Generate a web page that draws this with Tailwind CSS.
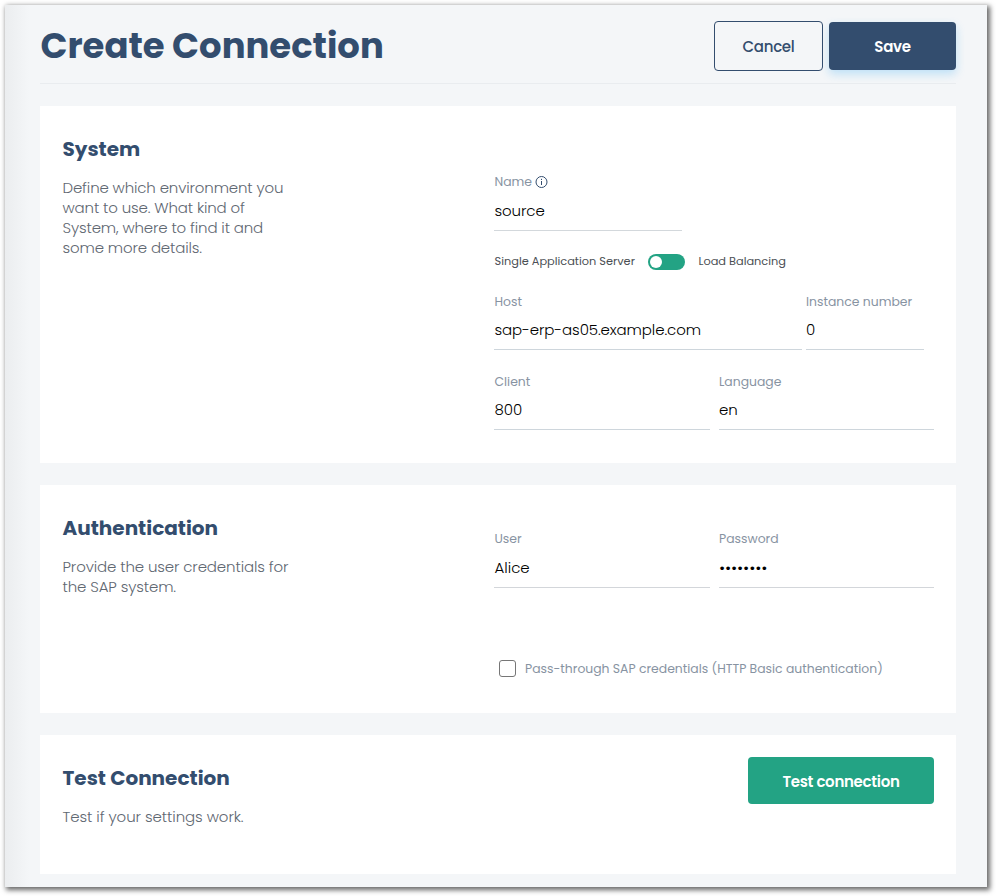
<!DOCTYPE html>
<html lang="en">
<head>
<meta charset="utf-8">
<title>Create Connection</title>
<script src="https://cdn.jsdelivr.net/npm/@tailwindcss/browser@4"></script>
</head>
<body class="h-[896px] w-[996px] overflow-hidden bg-white pt-[5px] pl-[5px] font-['Poppins',Inter,sans-serif] font-light text-[#5f6872]">
<main class="h-[882px] w-[982px] bg-[linear-gradient(to_right,#ebedef_0,#f4f6f8_24px)] pr-[31px] pl-[35px] shadow-[2px_2px_5px_1px_rgba(0,0,0,0.6)]">
  <header class="flex h-[79px] items-start justify-between border-b border-[#e9ecef] pt-4">
    <h1 class="pt-px pl-[0.5px] text-[35.4px] leading-[48px] font-bold whitespace-nowrap text-[#334d6e]">Create Connection</h1>
    <div class="flex gap-1.5">
      <button class="h-[50px] w-[109px] rounded border border-[#334d6e] text-[15px] font-medium tracking-[-0.3px] text-[#334d6e]"><span class="block pt-0.5">Cancel</span></button>
      <button class="mt-px h-12 w-[127px] rounded bg-[#334d6e] text-[15px] font-semibold tracking-[-0.3px] text-white shadow-[0_4px_10px_rgba(16,156,241,0.24)]"><span class="block pt-0.5">Save</span></button>
    </div>
  </header>

  <section class="mt-[22px] flex h-[357px] bg-white pl-[22px]">
    <div class="w-[432px] pt-[29px] pl-[0.5px]">
      <h2 class="text-[20px] leading-7 font-bold text-[#334d6e]">System</h2>
      <p class="mt-[15px] text-[15px] leading-5 tracking-[-0.15px] whitespace-nowrap">Define which environment you<br>want to use. What kind of<br>System, where to find it and<br>some more details.</p>
    </div>
    <div class="w-[440px] pt-[66px]">
      <div class="w-[188px] border-b border-[#d3d8dc] text-black">
        <div class="flex h-5 items-center gap-[3px] pl-[0.5px] text-[12.4px] font-normal text-[#8793a2]">Name
          <svg class="size-[13px]" viewBox="0 0 13 13" fill="none" stroke="#334d6e"><circle cx="6.5" cy="6" r="5.5"/><path d="M6.5 5v4M6.5 2.8v1.2"/></svg>
        </div>
        <div class="mt-2 h-[30px] pl-[0.5px] text-[15px] leading-[22px] tracking-[-0.1px]">source</div>
      </div>
      <div class="mt-[22px] flex h-[18px] items-center text-[11.35px] font-normal text-[#4b4f54]">
        <span class="w-[154px] pl-[0.5px]">Single Application Server</span>
        <span class="flex h-4 w-[37px] items-center rounded-full bg-[#23a384] pl-0.5"><i class="size-3 rounded-full bg-white"></i></span>
        <span class="ml-[13px] pl-[0.5px]">Load Balancing</span>
      </div>
      <div class="mt-[21px] flex gap-1">
        <div class="h-[58px] w-[308px] border-b border-[#ced6dc] pl-[0.5px]"><div class="text-[12.4px] leading-5 font-normal text-[#8793a2]">Host</div><div class="mt-[7px] text-[15px] leading-[22px] tracking-[-0.1px] text-black">sap-erp-as05.example.com</div></div>
        <div class="h-[58px] w-[118px] border-b border-[#ced6dc]"><div class="text-[12.4px] leading-5 font-normal whitespace-nowrap text-[#8793a2]">Instance number</div><div class="mt-[7px] text-[15px] leading-[22px] text-black">0</div></div>
      </div>
      <div class="mt-[22px] flex gap-[9px]">
        <div class="h-[58px] w-[216px] border-b border-[#ced6dc] pl-[0.5px]"><div class="text-[12.4px] leading-5 font-normal text-[#8793a2]">Client</div><div class="mt-[7px] text-[15px] leading-[22px] text-black">800</div></div>
        <div class="h-[58px] w-[215px] border-b border-[#ced6dc]"><div class="text-[12.4px] leading-5 font-normal text-[#8793a2]">Language</div><div class="mt-[7px] text-[15px] leading-[22px] text-black">en</div></div>
      </div>
    </div>
  </section>

  <section class="mt-[22px] flex h-[228px] bg-white pl-[22px]">
    <div class="w-[432px] pt-[29px] pl-[0.5px]">
      <h2 class="text-[20px] leading-7 font-bold text-[#334d6e]">Authentication</h2>
      <p class="mt-[15px] text-[15px] leading-5 tracking-[-0.13px] whitespace-nowrap">Provide the user credentials for<br>the SAP system.</p>
    </div>
    <div class="w-[440px] pt-11">
      <div class="flex gap-[9px]">
        <div class="h-[59px] w-[216px] border-b border-[#d3d6da] pl-[0.5px]"><div class="text-[12.4px] leading-5 font-normal text-[#8793a2]">User</div><div class="mt-2 text-[15px] leading-[22px] text-black">Alice</div></div>
        <div class="h-[59px] w-[215px] border-b border-[#d3d6da]"><div class="text-[12.4px] leading-5 font-normal text-[#8793a2]">Password</div><div class="mt-2 text-[15px] leading-[22px] font-normal tracking-[-0.15px] text-black">••••••••</div></div>
      </div>
      <label class="mt-[70px] ml-[5px] flex h-5 items-center gap-[9px] text-[12.4px] font-normal whitespace-nowrap text-[#8793a2]"><i class="size-[17px] rounded-[3px] border border-[#767676]"></i><span class="pt-0.5">Pass-through SAP credentials (HTTP Basic authentication)</span></label>
    </div>
  </section>

  <section class="mt-[22px] flex h-[139px] justify-between bg-white pr-[22px] pl-[22px]">
    <div class="pt-[29px] pl-[0.5px]">
      <h2 class="text-[20px] leading-7 font-bold text-[#334d6e]">Test Connection</h2>
      <p class="mt-[15px] text-[15px] leading-5 tracking-[-0.08px]">Test if your settings work.</p>
    </div>
    <button class="mt-[22px] h-[47px] w-[186px] rounded bg-[#23a384] text-[15px] font-semibold tracking-[-0.3px] text-white"><span class="block pt-[3px]">Test connection</span></button>
  </section>
</main>
</body>
</html>
